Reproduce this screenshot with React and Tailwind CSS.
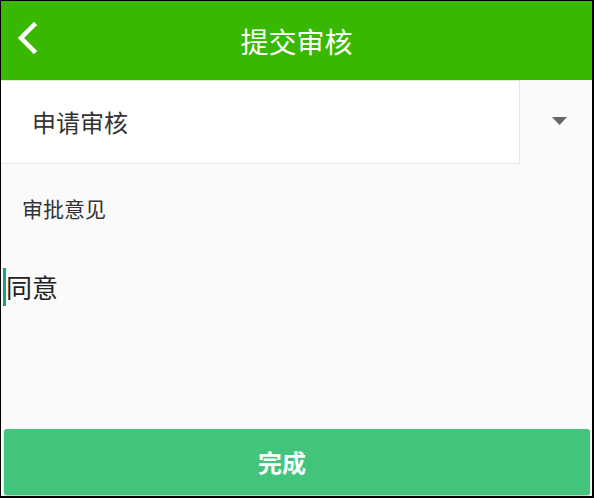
export default function App() {
  return (
    <div
      className="w-[594px] h-[498px] flex flex-col bg-[#fafafa] border-black border-t border-l border-r-2 border-b-2 overflow-hidden"
      style={{ fontFamily: '"Noto Sans CJK SC", "Noto Sans", sans-serif' }}
    >
      <div className="relative h-[79px] shrink-0 bg-[#38b800] flex items-center justify-center">
        <svg className="absolute left-[14px] top-[20px]" width="26" height="34" viewBox="0 0 26 34">
          <polyline points="19,4 6,17 19,30" fill="none" stroke="#fff" strokeWidth="4.5" strokeLinecap="square" />
        </svg>
        <span className="text-white text-[28px] leading-none">提交审核</span>
      </div>

      <div className="flex h-[84px] shrink-0">
        <div className="w-[519px] bg-white border-t border-[#d9efcc] border-r border-b border-r-[#e6e6e6] border-b-[#e6e6e6] flex items-center pl-[31px]">
          <span className="text-[#333] text-[24px] leading-none">申请审核</span>
        </div>
        <div className="flex-1 flex items-center justify-center pl-[6px] pb-[2px]">
          <svg width="15" height="8" viewBox="0 0 15 8">
            <polygon points="0,0 15,0 7.5,8" fill="#666" />
          </svg>
        </div>
      </div>

      <div className="mt-[30px] pl-[21px] text-[21px] leading-[28px] text-[#333]">审批意见</div>

      <div className="mt-[46px] flex items-center">
        <div className="ml-[2px] w-[3px] h-[38px] bg-[#1a9e8a]"></div>
        <span className="text-[26px] leading-none text-[#222]">同意</span>
      </div>

      <button className="mt-auto mb-[1px] ml-[3px] mr-0 w-[586px] h-[66px] rounded-[3px] bg-[#43c47d] shadow-[0_1px_2px_rgba(0,0,0,0.25)] text-white text-[24px] font-bold flex items-center justify-center pr-[30px]">
        完成
      </button>
    </div>
  );
}
